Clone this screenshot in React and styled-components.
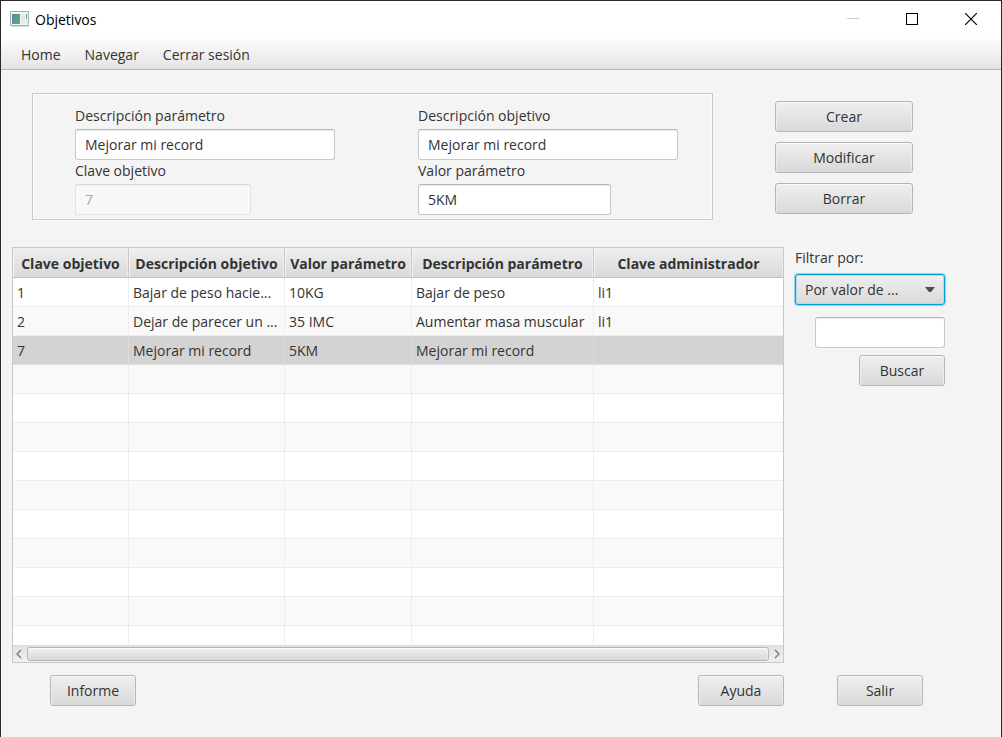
import React from "react";
import styled, { createGlobalStyle, css } from "styled-components";

const GlobalStyle = createGlobalStyle`
  *, *::before, *::after { box-sizing: border-box; }
  body { margin: 0; background: #f4f4f4; }
  body, button, input, select {
    font-family: "Open Sans", "Noto Sans", sans-serif;
    font-size: 14px;
    line-height: 21px;
    color: #333;
  }
`;

const raised = css`
  border: 1px solid #b5b5b5;
  border-radius: 3px;
  background: linear-gradient(#efefef, #d9d9d9);
  box-shadow: inset 0 1px 0 #fbfbfb, inset 1px 0 0 #ececec, inset -1px 0 0 #ececec;
`;

const Window = styled.div`
  display: flex;
  flex-direction: column;
  height: 100vh;
  min-height: 560px;
  border: 1px solid #2b282b;
  border-bottom: 0;
  background: #f4f4f4;
`;

const TitleBar = styled.header`
  display: flex;
  flex: none;
  align-items: center;
  gap: 1px;
  height: 38px;
  padding: 0 1px 2px 9px;
  background: #fff;
`;

const Title = styled.h1`
  flex: 1;
  margin: 0 0 0 5px;
  font-size: 14px;
  font-weight: 400;
  color: #000;
`;

const CaptionButton = styled.button`
  display: grid;
  place-items: center;
  width: 58px;
  height: 36px;
  padding: 0;
  border: 0;
  background: none;

  svg { display: block; }
`;

const MenuBar = styled.nav`
  display: flex;
  flex: none;
  height: 31px;
  padding-left: 8px;
  border-bottom: 1px solid #b5b5b5;
  background: linear-gradient(#fcfcfc, #e4e4e4);
`;

const MenuItem = styled.button`
  padding: 0 12px;
  border: 0;
  background: none;
`;

const Editor = styled.section`
  display: flex;
  align-items: flex-start;
  justify-content: space-between;
  gap: 62px;
  padding: 23px 88px 0 31px;
`;

const FieldGroup = styled.form`
  display: grid;
  flex: 1;
  grid-template-columns: 1fr 1fr;
  column-gap: 83px;
  padding: 11px 34px 4px 42px;
  border: 1px solid #c8c8c8;
  box-shadow: inset 0 0 0 1px #fbfbfb, 0 1px 0 #fbfbfb;
`;

const Field = styled.div`
  display: flex;
  flex-direction: column;
  gap: 3px;
`;

const TextInput = styled.input`
  width: ${(p) => p.$width || "100%"};
  height: 31px;
  padding: 0 9px;
  border: 1px solid #c8c8c8;
  border-top-color: #b5b5b5;
  border-radius: 3px;
  outline: 0;
  background: #fff;
  box-shadow: inset 0 1px 1px #ededed;

  &:disabled { opacity: 0.4; }
`;

const ButtonStack = styled.div`
  display: flex;
  flex-direction: column;
  gap: 10px;
  padding-top: 8px;
`;

const Button = styled.button`
  ${raised}
  width: ${(p) => (p.$wide ? "138px" : "86px")};
  height: 31px;
  padding: 0;
`;

const Main = styled.main`
  display: flex;
  flex: 1;
  gap: 11px;
  min-height: 0;
  padding: 27px 56px 0 11px;
`;

const TableView = styled.div`
  display: flex;
  flex: 1;
  flex-direction: column;
  min-width: 0;
  border: 1px solid #c8c8c8;
  background: #fff;
`;

const Viewport = styled.div`
  flex: 1 1 0;
  min-height: 0;
  overflow: hidden;
`;

const Table = styled.table`
  width: 100%;
  table-layout: fixed;
  border-collapse: separate;
  border-spacing: 0;
`;

const Col = styled.col`
  width: ${(p) => p.$width};
`;

const HeadCell = styled.th`
  height: 30px;
  padding: 2px 2px 0;
  overflow: hidden;
  white-space: nowrap;
  font-weight: 700;
  text-align: center;
  border-right: 1px solid #c8c8c8;
  border-bottom: 1px solid #c0c0c0;
  background: linear-gradient(#efefef, #d9d9d9);
  box-shadow: inset 1px 1px 0 #f3f3f3, inset -1px 0 0 #ececec;

  &:last-child { border-right: 0; }
`;

const Row = styled.tr`
  background: ${(p) => (p.$selected ? "#d3d3d3" : "#fff")};

  &:nth-child(even) { background: #f9f9f9; }
`;

const Cell = styled.td`
  height: 29px;
  padding: 0 4px;
  overflow: hidden;
  white-space: nowrap;
  border-right: 1px solid ${(p) => (p.$selected ? "#dcdcdc" : "#ededed")};
  border-bottom: 1px solid ${(p) => (p.$selected ? "#dcdcdc" : "#ededed")};

  &:last-child { border-right: 0; }
`;

const ScrollBar = styled.div`
  display: flex;
  align-items: center;
  flex: none;
  height: 17px;
  border-top: 1px solid #dcdcdc;
  background: linear-gradient(#e2e2e2, #f0f0f0);
`;

const ScrollArrow = styled.button`
  display: flex;
  align-items: center;
  justify-content: ${(p) => (p.$end ? "flex-end" : "flex-start")};
  width: 14px;
  height: 16px;
  padding: 0 3px;
  border: 0;
  background: none;
`;

const Thumb = styled.div`
  ${raised}
  flex: 1;
  height: 14px;
`;

const Filter = styled.aside`
  display: flex;
  flex-direction: column;
  align-items: flex-end;
  width: 150px;
`;

const FilterLabel = styled.label`
  align-self: flex-start;
  margin-bottom: 6px;
`;

const SelectBox = styled.div`
  display: grid;
  align-items: center;
  width: 100%;
  margin-bottom: 12px;

  > * { grid-area: 1 / 1; }
  > svg { justify-self: end; margin-right: 10px; pointer-events: none; }
`;

const Select = styled.select`
  appearance: none;
  width: 100%;
  height: 31px;
  padding: 0 28px 0 9px;
  border: 1px solid #039ed3;
  border-radius: 3px;
  outline: 0;
  background: linear-gradient(#efefef, #d9d9d9);
  box-shadow: 0 0 1px 1px #8fd3ea, inset 0 0 0 1px #b5dcea;
`;

const FilterInput = styled(TextInput)`
  margin-bottom: 7px;
`;

const Footer = styled.footer`
  display: flex;
  flex: none;
  gap: 53px;
  padding: 12px 78px 31px 49px;
`;

const Spacer = styled.div`
  flex: 1;
`;

const columns = [
  { title: "Clave objetivo", width: "116px" },
  { title: "Descripción objetivo", width: "156px" },
  { title: "Valor parámetro", width: "127px" },
  { title: "Descripción parámetro", width: "182px" },
  { title: "Clave administrador", width: "auto" },
];

const goals = [
  ["1", "Bajar de peso hacie...", "10KG", "Bajar de peso", "li1"],
  ["2", "Dejar de parecer un ...", "35 IMC", "Aumentar masa muscular", "li1"],
  ["7", "Mejorar mi record", "5KM", "Mejorar mi record", ""],
];

const SELECTED = 2;
const rows = [...goals, ...Array.from({ length: 10 }, () => ["", "", "", "", ""])];

function AppIcon() {
  return (
    <svg width="19" height="16" viewBox="0 0 19 16" aria-hidden="true">
      <defs>
        <linearGradient id="pane" x1="0" y1="0" x2="1" y2="1">
          <stop offset="0" stopColor="#5a87ae" />
          <stop offset="1" stopColor="#56ad7c" />
        </linearGradient>
      </defs>
      <rect x="0.5" y="0.5" width="18" height="14" fill="#f3f5f6" stroke="#a9adb2" />
      <rect x="1" y="15" width="18" height="1" fill="#dcdcdc" />
      <rect x="2" y="3" width="8" height="10" fill="url(#pane)" />
      <rect x="11" y="3" width="4" height="10" fill="#e3e8e9" />
      <rect x="16" y="3" width="1" height="5" fill="#5fa295" />
      <rect x="16" y="8" width="1" height="5" fill="#dde4e2" />
    </svg>
  );
}

function FormField({ id, label, ...input }) {
  return (
    <Field>
      <label htmlFor={id}>{label}</label>
      <TextInput id={id} {...input} />
    </Field>
  );
}

export default function App() {
  return (
    <>
      <GlobalStyle />
      <Window>
        <TitleBar>
          <AppIcon />
          <Title>Objetivos</Title>
          <CaptionButton aria-label="Minimizar" disabled>
            <svg width="12" height="12"><path d="M0 5.5H12" stroke="#ccc" /></svg>
          </CaptionButton>
          <CaptionButton aria-label="Maximizar">
            <svg width="12" height="12"><rect x="0.5" y="0.5" width="11" height="11" fill="none" stroke="#000" /></svg>
          </CaptionButton>
          <CaptionButton aria-label="Cerrar">
            <svg width="12" height="12"><path d="M0 0L12 12M12 0L0 12" stroke="#000" strokeWidth="1.2" /></svg>
          </CaptionButton>
        </TitleBar>
        <MenuBar>
          <MenuItem>Home</MenuItem>
          <MenuItem>Navegar</MenuItem>
          <MenuItem>Cerrar sesión</MenuItem>
        </MenuBar>

        <Editor>
          <FieldGroup>
            <FormField id="desc-parametro" label="Descripción parámetro" defaultValue="Mejorar mi record" />
            <FormField id="desc-objetivo" label="Descripción objetivo" defaultValue="Mejorar mi record" />
            <FormField id="clave-objetivo" label="Clave objetivo" defaultValue="7" $width="176px" disabled />
            <FormField id="valor-parametro" label="Valor parámetro" defaultValue="5KM" $width="193px" />
          </FieldGroup>
          <ButtonStack>
            <Button $wide>Crear</Button>
            <Button $wide>Modificar</Button>
            <Button $wide>Borrar</Button>
          </ButtonStack>
        </Editor>

        <Main>
          <TableView>
            <Viewport>
              <Table>
                <colgroup>
                  {columns.map((c) => <Col key={c.title} $width={c.width} />)}
                </colgroup>
                <thead>
                  <tr>
                    {columns.map((c) => <HeadCell key={c.title} scope="col">{c.title}</HeadCell>)}
                  </tr>
                </thead>
                <tbody>
                  {rows.map((cells, r) => (
                    <Row key={r} $selected={r === SELECTED}>
                      {cells.map((text, c) => (
                        <Cell key={c} $selected={r === SELECTED}>{text}</Cell>
                      ))}
                    </Row>
                  ))}
                </tbody>
              </Table>
            </Viewport>
            <ScrollBar>
              <ScrollArrow aria-label="Desplazar a la izquierda">
                <svg width="6" height="10"><path d="M5 1L1 5L5 9" fill="none" stroke="#777" strokeWidth="1.3" /></svg>
              </ScrollArrow>
              <Thumb />
              <ScrollArrow $end aria-label="Desplazar a la derecha">
                <svg width="6" height="10"><path d="M1 1L5 5L1 9" fill="none" stroke="#777" strokeWidth="1.3" /></svg>
              </ScrollArrow>
            </ScrollBar>
          </TableView>

          <Filter>
            <FilterLabel htmlFor="filtro">Filtrar por:</FilterLabel>
            <SelectBox>
              <Select id="filtro" defaultValue="valor">
                <option value="valor">Por valor de ...</option>
              </Select>
              <svg width="10" height="5" aria-hidden="true"><path d="M0 0H10L6 5H4Z" fill="#4d4d4d" /></svg>
            </SelectBox>
            <FilterInput $width="130px" aria-label="Texto del filtro" />
            <Button>Buscar</Button>
          </Filter>
        </Main>

        <Footer>
          <Button>Informe</Button>
          <Spacer />
          <Button>Ayuda</Button>
          <Button>Salir</Button>
        </Footer>
      </Window>
    </>
  );
}
